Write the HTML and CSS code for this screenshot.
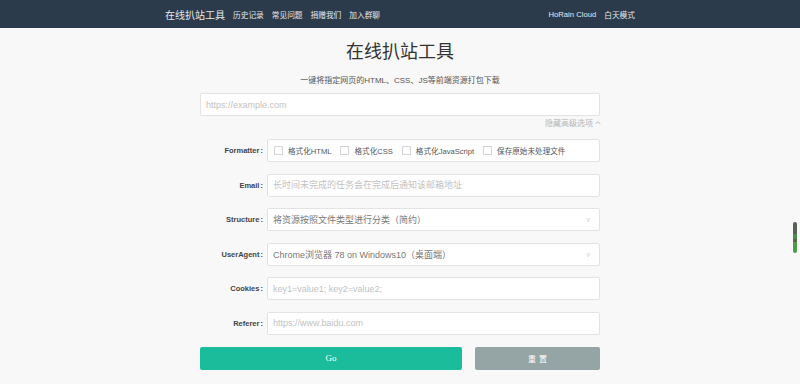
FILE: index.html
```html
<!DOCTYPE html>
<html lang="zh-CN">
  <head>
    <meta charset="UTF-8" />
    <meta name="viewport" content="width=device-width, initial-scale=1.0" />
    <title>在线扒站工具</title>
    <link rel="stylesheet" href="styles.css">
  </head>
  <body>
    <nav class="navbar">
      <div class="nav-inner">
        <a class="brand">在线扒站工具</a>
        <a class="nav-link">历史记录</a>
        <a class="nav-link">常见问题</a>
        <a class="nav-link">捐赠我们</a>
        <a class="nav-link">加入群聊</a>
        <span class="nav-spacer"></span>
        <a class="nav-link">HoRain Cloud</a>
        <a class="nav-link">白天模式</a>
      </div>
    </nav>

    <main class="container">
      <h1 class="title">在线扒站工具</h1>
      <p class="subtitle">一键将指定网页的HTML、CSS、JS等前端资源打包下载</p>

      <input class="field url-input" type="text" placeholder="https://example.com" />
      <div class="toggle-adv">隐藏高级选项 <span class="caret">^</span></div>

      <div class="form-rows">
        <div class="row">
          <label class="row-label">Formatter :</label>
          <div class="field checks">
            <span class="check"><i class="box"></i>格式化HTML</span>
            <span class="check"><i class="box"></i>格式化CSS</span>
            <span class="check"><i class="box"></i>格式化JavaScript</span>
            <span class="check"><i class="box"></i>保存原始未处理文件</span>
          </div>
        </div>

        <div class="row">
          <label class="row-label">Email :</label>
          <input class="field" type="text" placeholder="长时间未完成的任务会在完成后通知该邮箱地址" />
        </div>

        <div class="row">
          <label class="row-label">Structure :</label>
          <div class="field select">
            <span>将资源按照文件类型进行分类（简约）</span>
            <span class="chevron">v</span>
          </div>
        </div>

        <div class="row">
          <label class="row-label">UserAgent :</label>
          <div class="field select">
            <span>Chrome浏览器 78 on Windows10（桌面端）</span>
            <span class="chevron">v</span>
          </div>
        </div>

        <div class="row">
          <label class="row-label">Cookies :</label>
          <input class="field" type="text" placeholder="key1=value1; key2=value2;" />
        </div>

        <div class="row">
          <label class="row-label">Referer :</label>
          <input class="field" type="text" placeholder="https://www.baidu.com" />
        </div>
      </div>

      <div class="actions">
        <button class="btn btn-go">Go</button>
        <button class="btn btn-reset">重 置</button>
      </div>
    </main>

    <div class="side-widget"></div>
  </body>
</html>
```

FILE: styles.css
```css
:root {
  --nav-bg: #2c3b4b;
  --green: #1abc9c;
  --gray: #95a5a6;
  --border: #e3e3e3;
}

body {
  margin: 0;
  background-color: #f8f8f8;
  color: #333;
  font-family: "Liberation Sans", "Noto Sans CJK SC", sans-serif;
  height: 384px;
  overflow: hidden;
}

.navbar {
  background-color: var(--nav-bg);
  height: 28px;
}

.nav-inner {
  width: 470px;
  margin: 0 auto;
  height: 28px;
  display: flex;
  align-items: center;
  gap: 8px;
}

.brand {
  color: #e8eaec;
  font-size: 10px;
}

.nav-link {
  color: #e4e7ea;
  font-size: 7.7px;
}

.nav-spacer {
  flex: 1;
}

.container {
  width: 400px;
  margin: 0 auto;
}

.title {
  margin: 12px 0 0;
  text-align: center;
  font-size: 18px;
  font-weight: normal;
  line-height: 24px;
  color: #333;
}

.subtitle {
  margin: 11px 0 0;
  text-align: center;
  font-size: 8px;
  line-height: 12px;
  color: #555;
}

.field {
  box-sizing: border-box;
  height: 23px;
  background-color: white;
  border: 1px solid var(--border);
  border-radius: 2px;
  padding: 0 5px;
  font-family: inherit;
  font-size: 9px;
  color: #666;
  outline: none;
}

.field::placeholder {
  color: #c2c2c2;
}

.url-input {
  display: block;
  width: 100%;
  margin-top: 6px;
}

.toggle-adv {
  text-align: right;
  font-size: 8px;
  color: #b5b5b5;
  margin-top: 3px;
  line-height: 10px;
}

.caret {
  display: inline-block;
  transform: scaleX(1.4);
  margin-left: 1px;
}

.form-rows {
  display: flex;
  flex-direction: column;
  gap: 11.5px;
  margin-top: 10px;
}

.row {
  display: flex;
  align-items: center;
  gap: 4px;
}

.row-label {
  width: 63px;
  text-align: right;
  font-size: 7.5px;
  font-weight: bold;
  color: #444;
  word-spacing: -1px;
}

.row .field {
  flex: 1;
}

.checks {
  display: flex;
  align-items: center;
  padding-left: 6px;
  gap: 9px;
  font-size: 7.6px;
  color: #555;
}

.check {
  display: flex;
  align-items: center;
  gap: 5px;
}

.box {
  width: 9px;
  height: 9px;
  box-sizing: border-box;
  border: 1px solid #d6d6d6;
  background: white;
}

.select {
  display: flex;
  align-items: center;
  justify-content: space-between;
  color: #777;
}

.chevron {
  color: #d0d0d0;
  font-size: 7px;
  margin-right: 4px;
}

.actions {
  display: flex;
  gap: 13px;
  margin-top: 12px;
}

.btn {
  height: 23px;
  border: none;
  border-radius: 2px;
  color: white;
  cursor: pointer;
}

.btn-go {
  width: 262px;
  background-color: var(--green);
  font-family: "Liberation Serif", serif;
  font-size: 9px;
}

.btn-reset {
  flex: 1;
  background-color: var(--gray);
  font-size: 8px;
}

.side-widget {
  position: absolute;
  right: 3px;
  top: 222px;
  width: 4px;
  height: 31px;
  border-radius: 2px;
  background: linear-gradient(to bottom, #5a5f5a 0 40%, #4a8a4a 40% 55%, #5a5f5a 55% 65%, #4c9a4c 65% 100%);
}
```
